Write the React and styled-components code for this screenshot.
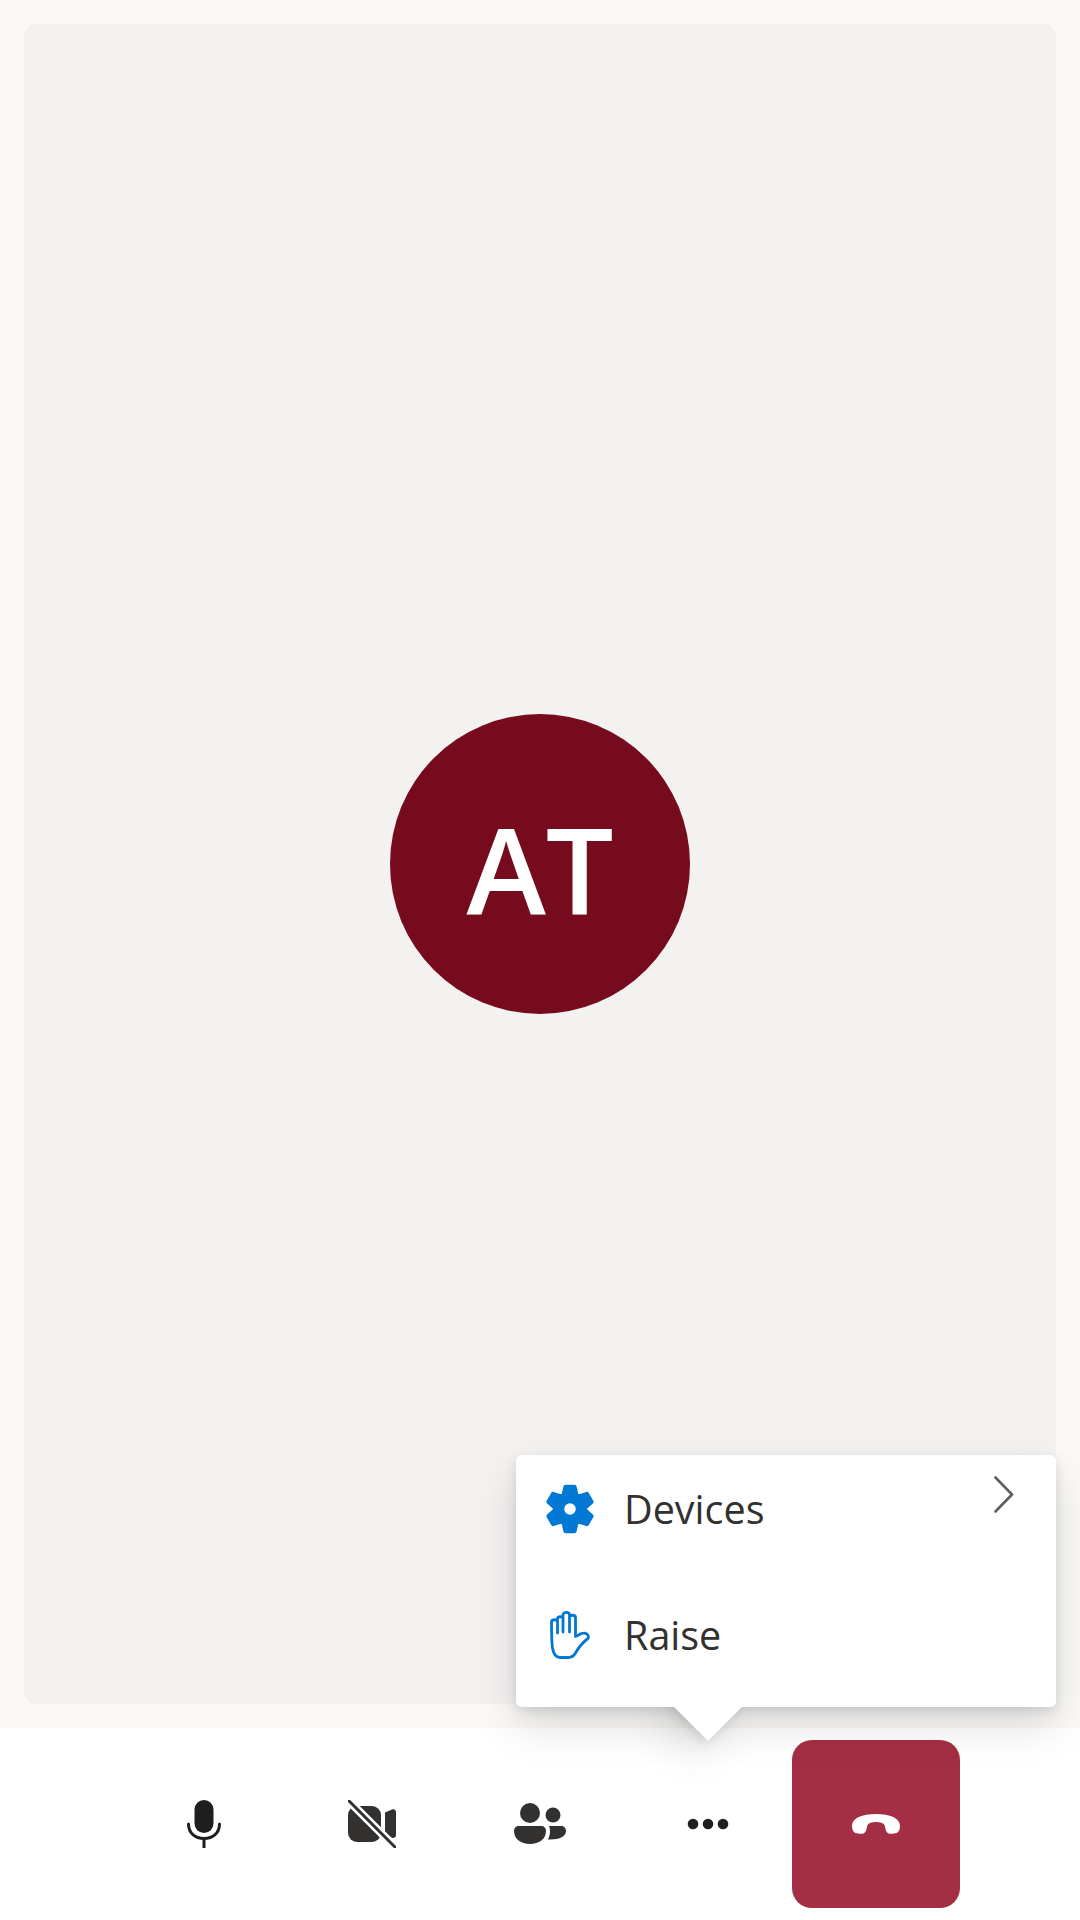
import React from "react";
import styled, { createGlobalStyle } from "styled-components";

const Global = createGlobalStyle`
  html, body { margin: 0; padding: 0; background: #fff; }
  * { box-sizing: border-box; }
`;

const Page = styled.div`
  position: relative;
  width: 1080px;
  height: 1920px;
  display: flex;
  flex-direction: column;
  background: #ffffff;
  overflow: hidden;
  font-family: "Open Sans", "Liberation Sans", sans-serif;
`;

const Stage = styled.main`
  flex: 0 0 1728px;
  padding: 24px;
  background: #faf9f8;
`;

const VideoPanel = styled.section`
  height: 100%;
  display: flex;
  align-items: center;
  justify-content: center;
  border-radius: 12px;
  background: #f3f2f1;
`;

const Avatar = styled.div`
  width: 300px;
  height: 300px;
  padding: 9px 0 0;
  border-radius: 50%;
  display: flex;
  align-items: center;
  justify-content: center;
  background: #750b1c;
  color: #ffffff;
  font-family: "Open Sans", "Liberation Sans", sans-serif;
  font-size: 120px;
  font-weight: 600;
  line-height: 1;
`;

const Toolbar = styled.nav`
  flex: 1;
  display: flex;
  justify-content: center;
  padding: 12px 0;
  background: #ffffff;
`;

const ToolButton = styled.button`
  width: 168px;
  height: 168px;
  padding: 0;
  border: 0;
  display: flex;
  align-items: center;
  justify-content: center;
  background: ${(p) => (p.$danger ? "#a42e43" : "transparent")};
  border-radius: ${(p) => (p.$danger ? "20px" : "0")};
`;

const PopupAnchor = styled.div`
  position: absolute;
  right: 24px;
  top: 1455px;
  width: 540px;
  height: 252px;
  border-radius: 6px;
  box-shadow: 0 19px 43px rgba(0, 0, 0, 0.13), 0 4px 11px rgba(0, 0, 0, 0.11);
`;

const Beak = styled.div`
  position: absolute;
  left: 168px;
  bottom: -24px;
  width: 48px;
  height: 48px;
  background: #ffffff;
  transform: rotate(45deg);
  box-shadow: 0 19px 43px rgba(0, 0, 0, 0.13), 0 4px 11px rgba(0, 0, 0, 0.11);
`;

const Menu = styled.ul`
  position: relative;
  height: 100%;
  margin: 0;
  padding: 0 0 18px;
  list-style: none;
  display: flex;
  flex-direction: column;
  gap: 18px;
  background: #ffffff;
  border-radius: 6px;
`;

const MenuRow = styled.li`
  height: 108px;
  display: flex;
  align-items: center;
  padding: 0 42px 0 29px;
`;

const MenuIcon = styled.span`
  width: 50px;
  height: 52px;
  display: flex;
  align-items: center;
  justify-content: center;
  flex: none;
`;

const MenuLabel = styled.span`
  margin: -1px 0 0 29px;
  font-size: 39.5px;
  line-height: 48px;
  color: #323130;
`;

const Chevron = styled.svg`
  margin-left: auto;
  align-self: flex-start;
  margin-top: 21px;
`;

function gearPath(cx, cy) {
  const pts = [];
  for (let i = 0; i < 6; i++) {
    const a = (-90 + i * 60) * (Math.PI / 180);
    [[16, -0.42], [23.5, -0.2], [23.5, 0.2], [16, 0.42]].forEach(([r, d]) => {
      pts.push(`${(cx + r * Math.cos(a + d)).toFixed(2)} ${(cy + r * Math.sin(a + d)).toFixed(2)}`);
    });
  }
  return `M${pts.join("L")}Z`;
}

const GearIcon = () => (
  <svg width="52" height="52" viewBox="0 0 52 52">
    <path d={gearPath(26, 26)} fill="#0078d4" stroke="#0078d4" strokeWidth="4.5" strokeLinejoin="round" />
    <circle cx="26" cy="26" r="6" fill="#ffffff" />
  </svg>
);

const HandIcon = () => (
  <svg width="40" height="48" viewBox="0 0 40 48" fill="none" stroke="#0078d4" strokeWidth="2.8" strokeLinecap="round" strokeLinejoin="round">
    <path d="M7.5 22V8C7.5 5 13 5 13 8V21M13 8V4C13 0.6 19.5 0.6 19.5 4V21M19.5 6.5C19.5 3.5 25.5 3.5 25.5 6.5V25.5L31.5 22.5C36 21 39.5 24 38 27.5C33 31 29 36 25.5 42C23.5 45.5 21.5 46.5 18.5 46.5H10C5.5 46.5 3.5 43 2.5 37C1.7 31 1.5 24 1.5 11C1.5 8 7.5 8 7.5 11" />
  </svg>
);

const MicIcon = () => (
  <svg width="48" height="48" viewBox="0 0 48 48">
    <rect x="14.5" y="0" width="19" height="33" rx="9.5" fill="#201f1e" />
    <path d="M8.5 24C8.5 33 15 38.5 24 38.5S39.5 33 39.5 24M24 38.5V48" fill="none" stroke="#201f1e" strokeWidth="3" strokeLinecap="round" />
  </svg>
);

const CameraOffIcon = () => (
  <svg width="48" height="48" viewBox="0 0 48 48">
    <rect x="0" y="6" width="33" height="36" rx="9" fill="#323130" />
    <path d="M37 12.5L44 9.4C46 8.6 48 10 48 12V35C48 37 46 38.6 44 37.8L37 34.5Z" fill="#323130" />
    <path d="M1 1L47 47" stroke="#ffffff" strokeWidth="8" />
    <path d="M1 1L47 47" stroke="#323130" strokeWidth="3" strokeLinecap="round" />
  </svg>
);

const PeopleIcon = () => (
  <svg width="52" height="42" viewBox="0 0 52 42">
    <circle cx="16" cy="10" r="10" fill="#323130" />
    <circle cx="39" cy="12" r="7.5" fill="#323130" />
    <path d="M5 23H27C30 23 32 25 32 28C32 36 25 41 16 41S0 36 0 28C0 25 2 23 5 23Z" fill="#323130" />
    <path d="M35 23H47C50 23 52 25 52 28C52 33 46 36.5 36 36.5C35.8 36.5 34.8 36.5 34 36.4C35.5 33.5 36 31 36 28C36 26 35.7 24.5 35 23Z" fill="#323130" />
  </svg>
);

const MoreIcon = () => (
  <svg width="42" height="12" viewBox="0 0 42 12">
    <circle cx="6" cy="6" r="5.3" fill="#201f1e" />
    <circle cx="21" cy="6" r="5.3" fill="#201f1e" />
    <circle cx="36" cy="6" r="5.3" fill="#201f1e" />
  </svg>
);

const HangUpIcon = () => (
  <svg width="48" height="20" viewBox="0 0 48 20">
    <path d="M0 12C0 4 10 0 24 0S48 4 48 12C48 16.5 46 19.5 42 19.5C40 19.8 38 19.8 36.5 19.5C34.8 19 34 17 33.5 15L32.5 11C31.5 9 28.5 8 24 8S16.5 9 15.5 11L14.5 15C14 17 13.2 19 11.5 19.5C10 19.8 8 19.8 6 19.5C2 19.5 0 16.5 0 12Z" fill="#ffffff" />
  </svg>
);

export default function App() {
  return (
    <Page>
      <Global />
      <Stage>
        <VideoPanel>
          <Avatar>AT</Avatar>
        </VideoPanel>
      </Stage>
      <Toolbar>
        <ToolButton aria-label="Mute"><MicIcon /></ToolButton>
        <ToolButton aria-label="Camera"><CameraOffIcon /></ToolButton>
        <ToolButton aria-label="People"><PeopleIcon /></ToolButton>
        <ToolButton aria-label="More"><MoreIcon /></ToolButton>
        <ToolButton $danger aria-label="Hang up"><HangUpIcon /></ToolButton>
      </Toolbar>
      <PopupAnchor>
        <Beak />
        <Menu>
          <MenuRow>
            <MenuIcon><GearIcon /></MenuIcon>
            <MenuLabel>Devices</MenuLabel>
            <Chevron width="20" height="37" viewBox="0 0 20 37">
              <path d="M1.5 1.5L18 18.5L1.5 35.5" fill="none" stroke="#605e5c" strokeWidth="2.6" strokeLinecap="round" strokeLinejoin="round" />
            </Chevron>
          </MenuRow>
          <MenuRow>
            <MenuIcon><HandIcon /></MenuIcon>
            <MenuLabel>Raise</MenuLabel>
          </MenuRow>
        </Menu>
      </PopupAnchor>
    </Page>
  );
}
